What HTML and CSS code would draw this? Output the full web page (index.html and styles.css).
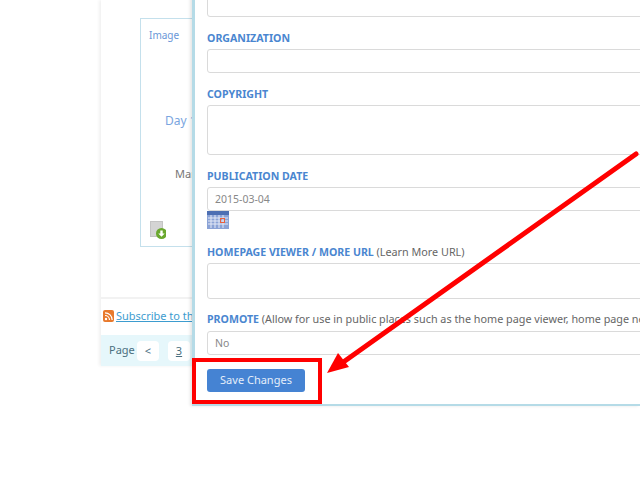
FILE: index.html
```
<!DOCTYPE html>
<html lang="en">
<head>
<meta charset="utf-8">
<title>Save Changes</title>
<link rel="stylesheet" href="styles.css">
</head>
<body>
<main class="page">
  <section class="card">
    <div class="image-label">Image</div>
    <div class="day">Day 1</div>
    <div class="mar">March</div>
    <svg class="dl-icon" width="16" height="18" viewBox="0 0 16 18">
      <rect x="0.5" y="0.5" width="12" height="15" fill="#d4d4d4" stroke="#c4c4c4"/>
      <circle cx="11.5" cy="12.5" r="5.5" fill="#6aa82e"/>
      <path d="M10.3 9.5h2.4v3h2l-3.2 3.3-3.2-3.3h2z" fill="#fff"/>
    </svg>
  </section>
  <div class="subscribe">
    <svg class="rss" width="11" height="12" viewBox="0 0 11 12">
      <rect width="11" height="12" rx="2" fill="#e8792c"/>
      <circle cx="3" cy="9" r="1.2" fill="#fff"/>
      <path d="M2 5.5a4.5 4.5 0 0 1 4.5 4.5M2 2.8a7.2 7.2 0 0 1 7.2 7.2" fill="none" stroke="#fff" stroke-width="1.2"/>
    </svg>
    <a class="sub-link" href="#">Subscribe to this list</a>
  </div>
  <nav class="pager">
    <span class="pager-label">Page</span>
    <span class="pager-btn">&lt;</span>
    <span class="pager-btn pager-num">3</span>
  </nav>
</main>

<form class="modal">
  <div class="field-top"></div>
  <label class="label">ORGANIZATION</label>
  <div class="input"></div>
  <label class="label">COPYRIGHT</label>
  <div class="input textarea"></div>
  <label class="label">PUBLICATION DATE</label>
  <div class="input value">2015-03-04</div>
  <svg class="cal" width="22" height="18" viewBox="0 0 22 18">
    <rect width="22" height="18" fill="#8ba3d6"/>
    <rect width="22" height="4" fill="#4d6fb3"/>
    <path d="M1 7h20M1 10h20M1 13h20M4 4v13M8 4v13M12 4v13M16 4v13" stroke="#e4e9f6" stroke-width="1"/>
    <rect x="13.5" y="7.5" width="4" height="4" fill="none" stroke="#e8603c"/>
  </svg>
  <label class="label label-home">HOMEPAGE VIEWER / MORE URL <span class="hint">(Learn More URL)</span></label>
  <div class="input url"></div>
  <label class="label label-promote">PROMOTE <span class="hint">(Allow for use in public places such as the home page viewer, home page news, etc.)</span></label>
  <div class="input value">No</div>
  <button class="save" type="button">Save Changes</button>
</form>

<div class="callout-box"></div>
<svg class="arrow" width="640" height="480" viewBox="0 0 640 480">
  <path d="M636 154 342 363" fill="none" stroke="#f00" stroke-width="5" stroke-linecap="round"/>
  <path d="M327 373 338 353 349 367z" fill="#f00"/>
</svg>
</body>
</html>
```

FILE: styles.css
```
* { box-sizing: border-box; }
html, body { margin: 0; height: 480px; overflow: hidden; background: #fff; }
body { font-family: "Noto Sans", sans-serif; font-size: 11px; color: #666; position: relative; }

.page {
  position: absolute;
  left: 101px;
  top: 0;
  width: 539px;
  height: 366px;
  background: #fff;
  box-shadow: -2px 0 3px rgba(0,0,0,.06);
  display: flex;
  flex-direction: column;
}
.card {
  margin: 18px 0 0 39px;
  width: 200px;
  height: 229px;
  border: 1px solid #c4e0ec;
  padding: 8px 8px 0;
  display: flex;
  flex-direction: column;
}
.image-label { color: #6a97d8; font-size: 10px; line-height: 16px; }
.day { color: #7aa5e0; font-size: 12px; line-height: 16px; margin: 70px 0 0 16px; white-space: nowrap; }
.mar { color: #777; line-height: 16px; margin: 37px 0 0 26px; }
.dl-icon { margin: 39px 0 0 1px; }
.subscribe {
  margin-top: 50px;
  border-top: 2px solid #f2f2f2;
  padding: 0 0 3px 2px;
  display: flex;
  align-items: center;
  gap: 2px;
  height: 38px;
}
.sub-link { color: #3d9ccf; white-space: nowrap; }
.pager {
  height: 31px;
  background: #e6f7fb;
  display: flex;
  align-items: center;
  padding-left: 8px;
  color: #4a6f80;
}
.pager-label { width: 28px; padding-bottom: 2px; }
.pager-btn {
  width: 22px;
  height: 20px;
  background: #fff;
  border-radius: 4px;
  text-align: center;
  line-height: 20px;
  color: #4a6f80;
}
.pager-num { margin-left: 9px; text-decoration: underline; }

.modal {
  position: absolute;
  left: 192px;
  top: -20px;
  width: 448px;
  height: 426px;
  background: #fff;
  border-left: 3px solid #b5dbe7;
  border-bottom: 2px solid #b5dbe7;
  box-shadow: -2px 0 3px rgba(0,0,0,.1);
  padding-left: 12px;
  display: flex;
  flex-direction: column;
  align-items: flex-start;
  overflow: hidden;
}
.field-top, .input {
  width: 460px;
  border: 1px solid #dadada;
  border-radius: 3px;
  background: #fff;
  flex: none;
}
.field-top { height: 37px; }
.input { height: 24px; }
.textarea { height: 50px; }
.url { height: 36px; }
.value { color: #888; font-size: 10.5px; line-height: 22px; padding-left: 7px; }
.label {
  color: #4a86d0;
  font-weight: 700;
  font-size: 10.6px;
  line-height: 14px;
  margin-top: 14px;
  margin-bottom: 4px;
  white-space: nowrap;
}
.label-promote { margin-top: 13px; margin-bottom: 5px; }
.hint { color: #666; font-weight: 400; font-size: 10.8px; }
.cal { display: block; flex: none; margin-bottom: 2px; }
.save {
  margin-top: 14px;
  width: 98px;
  height: 23px;
  background: #4583d3;
  border: 0;
  border-radius: 3px;
  color: #e4eefa;
  font: 11px "Noto Sans", sans-serif;
  padding: 0 0 2px;
}

.callout-box {
  position: absolute;
  left: 192px;
  top: 358px;
  width: 130px;
  height: 46px;
  border: 4px solid #f00;
}
.arrow { position: absolute; left: 0; top: 0; pointer-events: none; }
```
